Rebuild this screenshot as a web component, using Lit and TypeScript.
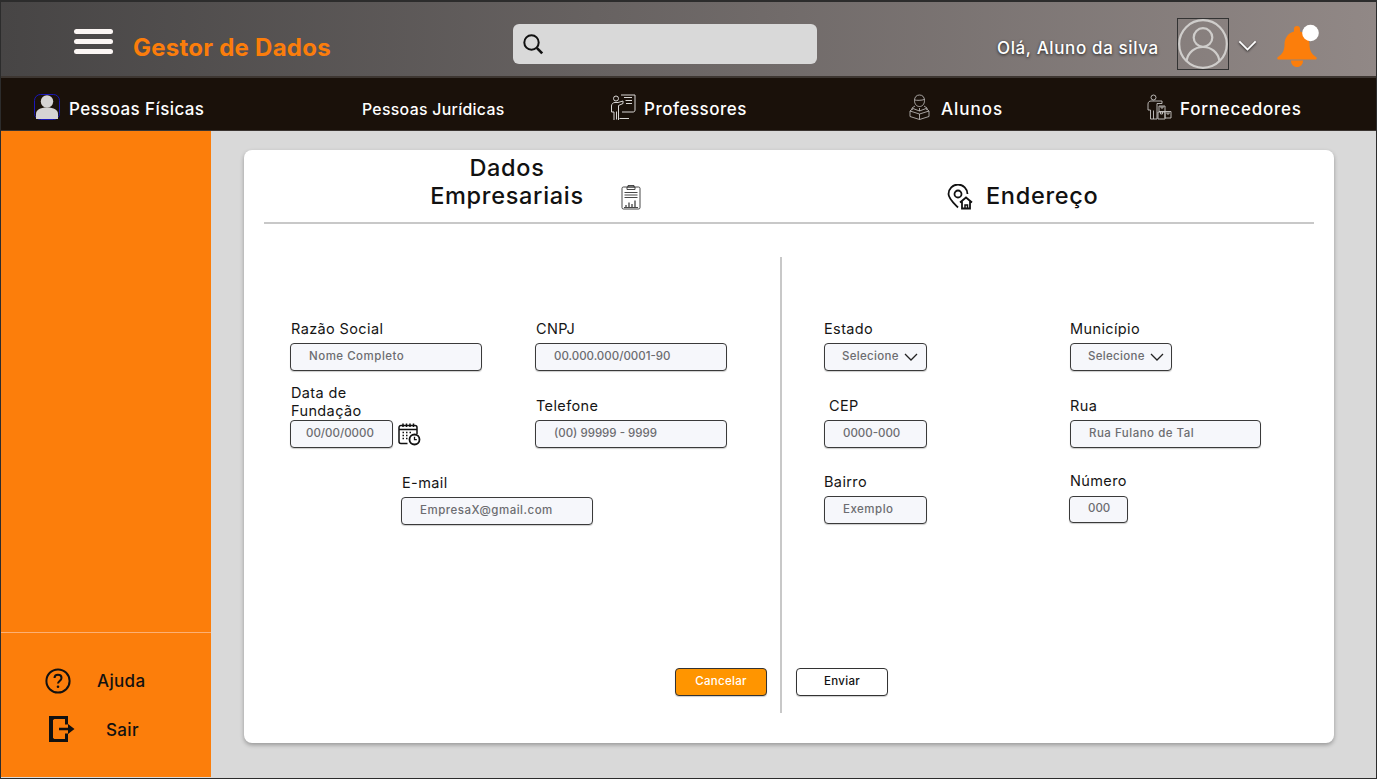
import { html, css, LitElement } from "lit";
import { customElement } from "lit/decorators.js";

const chevron = html`<svg class="chev" viewBox="0 0 14 8" width="14" height="8" fill="none" stroke="currentColor" stroke-width="1.3"><path d="M1 1l6 6 6-6" /></svg>`;

@customElement("app-root")
export class AppRoot extends LitElement {
  static styles = css`
    :host {
      display: block;
      width: 1377px;
      height: 779px;
      box-sizing: border-box;
      border: 1px solid #2c2c2c;
      border-top-width: 2px;
      font-family: Inter, "Open Sans", sans-serif;
      background: #d9d9d9;
      overflow: hidden;
      color: #111;
    }
    .top {
      height: 76px;
      box-sizing: border-box;
      padding-top: 10px;
      display: flex;
      align-items: center;
      background: linear-gradient(90deg, #474545 0%, #918886 100%);
      border-bottom: 2px solid #3d3631;
    }
    .burger {
      margin: -6px 0 0 73px;
      width: 39px;
      display: flex;
      flex-direction: column;
      gap: 5px;
    }
    .burger i {
      display: block;
      height: 5px;
      border-radius: 3px;
      background: #fbf6f4;
    }
    .brand {
      margin-left: 20px;
      width: 380px;
      font-size: 24px;
      font-weight: 700;
      color: #fb7d0b;
      letter-spacing: 0.25px;
      padding-top: 6px;
    }
    .search {
      width: 304px;
      height: 40px;
      border-radius: 6px;
      background: #d9d9d9;
      display: flex;
      align-items: center;
      padding-left: 9px;
      box-sizing: border-box;
    }
    .hello {
      margin-left: 180px;
      width: 180px;
      color: #fff;
      font-size: 17px;
      font-weight: 500;
      letter-spacing: 0.63px;
      padding-top: 8px;
      text-shadow: 0 1px 3px rgba(0, 0, 0, 0.75);
    }
    .avatar {
      width: 52px;
      height: 52px;
      box-sizing: border-box;
      border: 1px solid #333;
      display: block;
    }
    .top .chev {
      margin: 3px 0 0 9px;
      width: 19px;
      height: 11px;
      color: #fff;
      filter: drop-shadow(0 1px 1px rgba(0, 0, 0, 0.7));
    }
    .bell {
      margin: 4px 0 0 20px;
      display: block;
    }
    .nav {
      height: 53px;
      box-sizing: border-box;
      padding: 10px 0 0 33px;
      display: grid;
      grid-template-columns: 328px 248px 299px 238px 1fr;
      align-items: center;
      background: #1a110a;
      border-bottom: 1px solid #3a3430;
      color: #fff;
      font-size: 17px;
      font-weight: 500;
      letter-spacing: 0.5px;
    }
    .nav span {
      display: flex;
      align-items: center;
      gap: 8px;
    }
    .nav svg {
      display: block;
      margin-bottom: 5px;
    }
    .nav .first {
      gap: 9px;
      letter-spacing: 0.4px;
    }
    .nav .small {
      font-size: 15.8px;
      letter-spacing: 0.32px;
    }
    .nav .wide {
      gap: 11px;
      letter-spacing: 1px;
    }
    .nav .wider {
      letter-spacing: 0.75px;
    }
    .main {
      display: flex;
      height: 646px;
    }
    .side {
      width: 210px;
      background: #fc7e0b;
      display: flex;
      flex-direction: column;
      justify-content: flex-end;
    }
    .side-foot {
      height: 145px;
      box-sizing: border-box;
      border-top: 1px solid #fdb073;
      padding: 35px 0 0 44px;
      display: grid;
      grid-template-columns: 52px 1fr;
      grid-auto-rows: 49px;
      align-items: start;
      font-size: 17px;
      font-weight: 500;
      letter-spacing: 0.35px;
    }
    .side-foot b {
      font-weight: 500;
      line-height: 26px;
    }
    .side-foot .sair {
      padding-left: 9px;
    }
    .side-foot svg {
      display: block;
    }
    .side-foot .exit {
      margin: -1px 0 0 4px;
    }
    .card {
      margin: 19px 0 0 33px;
      width: 1090px;
      height: 593px;
      box-sizing: border-box;
      padding: 0 20px;
      background: #fff;
      border-radius: 8px;
      box-shadow: 0 2px 4px rgba(0, 0, 0, 0.3);
    }
    .head {
      height: 74px;
      box-sizing: border-box;
      display: grid;
      grid-template-columns: 517px 1fr;
      align-items: end;
      border-bottom: 2px solid #c8c8c8;
      padding-bottom: 12px;
      font-size: 23.5px;
      font-weight: 500;
      line-height: 28px;
      letter-spacing: 0.7px;
    }
    .head > div {
      display: flex;
      align-items: flex-end;
    }
    .head .t1 {
      padding-left: 150px;
    }
    .head .t1 h2 {
      width: 186px;
      text-align: center;
    }
    .head .t1 svg {
      margin-left: 21px;
    }
    .head .t2 {
      padding-left: 166px;
      gap: 13px;
    }
    h2 {
      margin: 0;
      font: inherit;
    }
    .body {
      margin-top: 33px;
      height: 456px;
      display: grid;
      grid-template-columns: 516px 1fr;
    }
    .panel {
      display: flex;
      flex-direction: column;
      padding-top: 63px;
      padding-bottom: 17px;
      box-sizing: border-box;
    }
    .panel.right {
      border-left: 2px solid #c8c8c8;
    }
    .grid {
      display: grid;
      grid-template-columns: 245px 245px;
      padding-left: 26px;
      row-gap: 13px;
      align-items: end;
    }
    .right .grid {
      grid-template-columns: 246px 246px;
      grid-template-rows: 51px 52px 51px;
      padding-left: 42px;
      row-gap: 25px;
    }
    .field {
      display: flex;
      flex-direction: column;
      align-items: flex-start;
    }
    label {
      font-size: 14.5px;
      line-height: 18px;
      padding: 0 0 5px 1px;
      letter-spacing: 0.38px;
      color: #151515;
    }
    .right label {
      padding-left: 0;
    }
    label.two {
      padding-bottom: 0;
      width: 90px;
    }
    .right label.shift {
      padding-left: 5px;
    }
    .inrow {
      display: flex;
      align-items: center;
      gap: 5px;
    }
    .inrow svg {
      display: block;
    }
    input,
    .select {
      display: block;
      box-sizing: border-box;
      width: 192px;
      height: 28px;
      border: 1px solid #3a3a3a;
      border-radius: 4px;
      background: #f6f7fb;
      box-shadow: 0 1px 1px rgba(0, 0, 0, 0.2);
      padding: 0 0 3px 18px;
      font: inherit;
      font-size: 11.5px;
      font-weight: 500;
      letter-spacing: 0.5px;
      color: #6c6c70;
      outline: none;
    }
    input::placeholder {
      color: #6c6c70;
      opacity: 1;
    }
    input.num {
      letter-spacing: 0;
    }
    .w103 {
      width: 103px;
    }
    input.w191 {
      width: 191px;
    }
    .w59 {
      width: 59px;
      height: 27px;
      margin-left: -1px;
    }
    input.date {
      padding-left: 15px;
    }
    .select {
      width: 103px;
      display: flex;
      align-items: center;
      gap: 5px;
      padding-left: 17px;
      letter-spacing: 0.3px;
    }
    .select .chev {
      color: #222;
      margin-top: 3px;
    }
    .w102 {
      width: 102px;
    }
    .email {
      grid-column: 1 / 3;
      margin: 13px 0 0 111px;
    }
    .up {
      align-self: start;
      margin-top: -1px;
    }
    .up label {
      padding-bottom: 6px;
    }
    .actions {
      margin-top: auto;
      display: flex;
    }
    .left .actions {
      justify-content: flex-end;
      padding-right: 13px;
    }
    .right .actions {
      padding-left: 14px;
    }
    button {
      width: 92px;
      height: 28px;
      border: 1px solid #333;
      border-radius: 4px;
      background: #fff;
      font: inherit;
      font-size: 11.5px;
      font-weight: 500;
      letter-spacing: 0.3px;
      color: #111;
      padding: 0 0 3px;
      box-shadow: 0 1px 1px rgba(0, 0, 0, 0.2);
    }
    button.cancel {
      background: #ff9500;
      color: #fff;
    }
  `;

  private field(name: string, hint: string, cls = "", labelCls = "") {
    return html`<div class="field ${cls.includes("w59") ? "up" : ""}">
      <label class=${labelCls}>${name}</label>
      <input class=${cls} placeholder=${hint} />
    </div>`;
  }

  private select(name: string, cls = "") {
    return html`<div class="field">
      <label>${name}</label>
      <div class="select ${cls}">Selecione ${chevron}</div>
    </div>`;
  }

  render() {
    return html`
      <div class="top">
        <div class="burger"><i></i><i></i><i></i></div>
        <div class="brand">Gestor de Dados</div>
        <div class="search">
          <svg width="22" height="22" viewBox="0 0 22 22" fill="none" stroke="#111" stroke-width="2">
            <circle cx="9.5" cy="9.5" r="7.2" />
            <path d="M14.8 14.8l5.4 5.6" stroke-width="2.6" />
          </svg>
        </div>
        <div class="hello">Olá, Aluno da silva</div>
        <svg class="avatar" viewBox="0 0 50 50" fill="none" stroke="#cfcdcb" stroke-width="2.2">
          <circle cx="25" cy="25" r="23.8" />
          <circle cx="25" cy="18.5" r="9.3" />
          <path d="M8.5 42c1.5-9 8.5-14 16.5-14s15 5 16.5 14" />
        </svg>
        ${chevron}
        <svg class="bell" width="42" height="46" viewBox="0 0 42 46">
          <path fill="#fc7e0b" d="M20 3a3 3 0 0 1 3 3v2.500c6 1.500 9.500 6.500 9.500 13 0 6 2 9.500 6.500 12.500 1.300.9.800 2.500-.8 2.500H1.800c-1.600 0-2.100-1.600-.8-2.500 4.500-3 6.500-6.500 6.500-12.500 0-6.500 3.500-11.500 9.500-13V6a3 3 0 0 1 3-3z" />
          <path fill="#fc7e0b" d="M14 37.500h12c0 4-2.500 6.500-6 6.500s-6-2.500-6-6.500z" />
          <circle cx="33.500" cy="10" r="8.300" fill="#fff" />
        </svg>
      </div>
      <div class="nav">
        <span class="first">
          <svg width="26" height="26" viewBox="0 0 26 26">
            <rect x=".5" y=".5" width="25" height="25" rx="6" fill="#1a110a" stroke="#1a17b8" />
            <circle cx="13" cy="7.500" r="6.200" fill="#d5d3d4" />
            <path fill="#d5d3d4" d="M2 25v-5c0-4 4-6.500 11-6.500s11 2.500 11 6.500v5z" />
          </svg>
          Pessoas Físicas
        </span>
        <span class="small">Pessoas Jurídicas</span>
        <span>
          <svg width="26" height="26" viewBox="0 0 26 26" fill="none" stroke="#d8d6d4" stroke-width="1">
            <circle cx="6" cy="4.500" r="2.500" />
            <path d="M1.500 18v-6c0-2 1.500-3.500 3.500-3.500h3l5-1.500v2.500l-4.500 2v15H4v-8.500H1.500zM6.500 17.500v8" />
            <path d="M11 1h14v15c0 1.500-1 2-2 2H12M9.500 24.500H19M14 3.500h8M15.500 6.500h6.500M16 9.500h6" />
          </svg>
          Professores
        </span>
        <span class="wide">
          <svg width="21" height="26" viewBox="0 0 21 26" fill="none" stroke="#c9c7c5" stroke-width=".8">
            <path d="M5.500 6.500C5.500 3 7.500 1 10.500 1s5 2 5 5.500-2 6-5 6-5-2.500-5-6zM5.500 6c2 .5 7 .5 10-.5" />
            <path d="M6 12l-3 2v2M15 12l3 2v2M10.500 14v3" />
            <path d="M10.500 17L4 14.500 1 17v5.500l9.500 3 9.500-3V17l-3-2.500zM1 17l9.500 3 9.500-3M10.500 20v5.500" />
          </svg>
          Alunos
        </span>
        <span class="wider">
          <svg width="25" height="26" viewBox="0 0 25 26" fill="none" stroke="#c9c7c5" stroke-width=".9">
            <circle cx="6.500" cy="3.500" r="2.500" />
            <path d="M1 16V10c0-2 1.500-3 3-3h11v2.500h-5V25H3.500v-9H1zM6.500 16.500V25" />
            <path d="M12 12h6v5.500h-6zM14 12v2h2v-2M18 17.500h6V24h-6zM11 18h7v7h-7zM20 17.500v2.500h2v-2.500M13.500 18v2h2v-2" />
          </svg>
          Fornecedores
        </span>
      </div>
      <div class="main">
        <div class="side">
          <div class="side-foot">
            <svg width="26" height="26" viewBox="0 0 26 26" fill="none" stroke="#111" stroke-width="2">
              <circle cx="13" cy="13" r="11.600" />
              <path d="M9.500 10c0-2 1.500-3.300 3.500-3.300s3.500 1.300 3.500 3.200c0 3-3.500 3-3.500 5.600" />
              <circle cx="13" cy="18.700" r="1.300" fill="#111" stroke="none" />
            </svg>
            <b>Ajuda</b>
            <svg class="exit" width="26" height="26" viewBox="0 0 26 26">
              <path fill="none" stroke="#111" stroke-width="3" d="M17.500 8.500v-7H5.500C3.500 1.500 2 3 2 5v16c0 2 1.500 3.500 3.500 3.500h12v-7" />
              <path fill="#111" d="M0 0h5v3.500H4v19h1V26H0z" />
              <path fill="#111" d="M10 11.700h9V8l6.500 5-6.500 5v-3.700h-9z" />
            </svg>
            <b class="sair">Sair</b>
          </div>
        </div>
        <div class="card">
          <div class="head">
            <div class="t1">
              <h2>Dados Empresariais</h2>
              <svg width="20" height="26" viewBox="0 0 20 26" fill="none" stroke="#333" stroke-width=".9">
                <rect x="1" y="3" width="18" height="22" rx="1.500" />
                <path d="M7 3V1.500h6V3M6 3h8v2.500H6zM3.500 8.500h13M3.500 11h13M3.500 13.500h13M3 23.500h14" />
                <path d="M5 23v-2M8 23v-4.500M11 23v-3M14 23v-6.500" stroke-width="1.200" />
              </svg>
            </div>
            <div class="t2">
              <svg width="26" height="26" viewBox="0 0 26 26" fill="none" stroke="#111" stroke-width="1.800">
                <path d="M11 23.500C6 18.500 1.500 14.500 1.500 10a9.500 9.500 0 0 1 19 0" />
                <circle cx="11" cy="10" r="3.500" />
                <path d="M13 18.500l6-5 6 5M15 17.500v7h8v-7" />
                <path d="M18 24.500V21h2.500v3.500" stroke-width="1.500" />
              </svg>
              <h2>Endereço</h2>
            </div>
          </div>
          <div class="body">
            <div class="panel left">
              <div class="grid">
                ${this.field("Razão Social", "Nome Completo")} ${this.field("CNPJ", "00.000.000/0001-90", "num")}
                <div class="field">
                  <label class="two">Data de Fundação</label>
                  <div class="inrow">
                    <input class="w103 date num" placeholder="00/00/0000" />
                    <svg width="23" height="23" viewBox="0 0 23 23" fill="none" stroke="#111" stroke-width="1.500">
                      <path d="M9.500 20.500H3a2 2 0 0 1-2-2V4.500a2 2 0 0 1 2-2h14a2 2 0 0 1 2 2V11" />
                      <path d="M5 .5v3.500M8.500 .5v3.500M12 .5v3.500M15.500 .5v3.500M1 6.500h18" />
                      <path d="M4.500 9.500h1.500M8 9.500h1.500M11.500 9.500H13M4.500 12.500h1.500M8 12.500h1.500M4.500 15.500h1.500M8 15.500h1.500" />
                      <circle cx="16.500" cy="16.500" r="5" stroke-width="1.800" />
                      <path d="M16.500 13.800v2.900h2.300" stroke-width="1.300" />
                    </svg>
                  </div>
                </div>
                ${this.field("Telefone", "(00) 99999 - 9999", "num")}
                <div class="email">${this.field("E-mail", "EmpresaX@gmail.com")}</div>
              </div>
              <div class="actions"><button class="cancel">Cancelar</button></div>
            </div>
            <div class="panel right">
              <div class="grid">
                ${this.select("Estado")} ${this.select("Município", "w102")}
                ${this.field("CEP", "0000-000", "w103 num", "shift")} ${this.field("Rua", "Rua Fulano de Tal", "w191")}
                ${this.field("Bairro", "Exemplo", "w103")} ${this.field("Número", "000", "w59 num")}
              </div>
              <div class="actions"><button>Enviar</button></div>
            </div>
          </div>
        </div>
      </div>
    `;
  }
}
